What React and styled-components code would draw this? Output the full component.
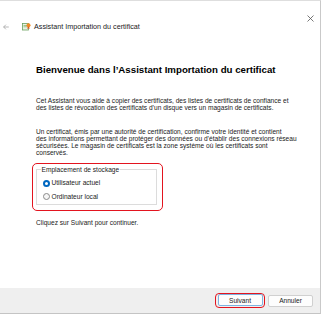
import React from 'react'
import styled, { createGlobalStyle } from 'styled-components'

const Global = createGlobalStyle`
  html, body { margin: 0; padding: 0; background: #ffffff; }
  body { font-family: 'Liberation Sans', Arial, sans-serif; color: #1b1b1b; }
`

const Window = styled.div`
  box-sizing: border-box;
  width: 321px;
  height: 314px;
  border-top: 1px solid #dedede;
  border-right: 1px solid #c9c9c9;
  border-bottom: 1px solid #c4c4c4;
  display: flex;
  flex-direction: column;
  background: #ffffff;
`

const Header = styled.div`
  display: flex;
  justify-content: space-between;
  align-items: flex-start;
  padding: 14px 6px 0 3px;
`

const NavGroup = styled.div`
  display: flex;
  align-items: center;
  margin-top: 7px;
  font-size: 7.2px;
  line-height: 9px;
  color: #1a1a1a;
`

const IconButton = styled.span`
  display: flex;
  align-items: center;
  margin-right: ${(p) => p.$space || 0}px;
`

const Content = styled.div`
  flex: 1;
  padding: 33px 0 0 36px;
  display: flex;
  flex-direction: column;
  align-items: flex-start;
`

const Heading = styled.h1`
  margin: 0 0 23px;
  font-size: 9.7px;
  line-height: 11px;
  font-weight: 700;
  color: #000;
  white-space: nowrap;
`

const Text = styled.p`
  margin: 0 0 ${(p) => p.$gap || 0}px;
  font-size: 6.6px;
  line-height: 6.9px;
  color: #1a1a1a;
  white-space: nowrap;
`

const Highlight = styled.div`
  box-sizing: border-box;
  width: 131px;
  height: 48px;
  margin-left: -4px;
  margin-bottom: 9px;
  border: 1.5px solid #e3141f;
  border-radius: 5px;
  padding: 2px 0 0 2.5px;
`

const Group = styled.fieldset`
  box-sizing: border-box;
  width: 121px;
  height: 39px;
  margin: 0;
  border: 1px solid #dcdcdc;
  padding: 6px 0 0 6px;
  display: flex;
  flex-direction: column;
  gap: 6px;
  legend {
    font-size: 6.6px;
    line-height: 7px;
    padding: 0 1px;
    margin-left: -2px;
    color: #1a1a1a;
  }
`

const RadioRow = styled.label`
  display: flex;
  align-items: center;
  gap: 2px;
  font-size: 6.6px;
  line-height: 7.5px;
  color: #1a1a1a;
`

const RadioDot = styled.span`
  box-sizing: border-box;
  width: 7px;
  height: 7px;
  border-radius: 50%;
  border: ${(p) => (p.$checked ? '2px solid #0067c0' : '1px solid #8a8a8a')};
  background: ${(p) => (p.$checked ? '#ffffff' : '#f6f6f6')};
`

const Footer = styled.div`
  height: 25px;
  background: #efefef;
  display: flex;
  justify-content: flex-end;
  align-items: center;
  gap: 3px;
  padding-right: 7px;
`

const Focus = styled.div`
  display: flex;
  padding: 0.5px 1.5px 1px;
  border: 1.5px solid #e3141f;
  border-radius: 4px;
`

const Button = styled.button`
  box-sizing: border-box;
  width: 45px;
  height: 12px;
  padding: 0;
  font-family: inherit;
  font-size: 6.6px;
  color: #1a1a1a;
  background: #fdfdfd;
  border: 1px solid ${(p) => (p.$primary ? '#7fb3e0' : '#d0d0d0')};
  border-radius: 2px;
`

const CertIcon = () => (
  <svg width="9" height="9" viewBox="0 0 9 9">
    <rect x="0.5" y="1.5" width="6" height="6.5" fill="#e8f2e4" stroke="#6aa05c" strokeWidth="0.8" />
    <rect x="1.5" y="3" width="3.5" height="0.7" fill="#7fb06d" />
    <rect x="1.5" y="4.5" width="3.5" height="0.7" fill="#7fb06d" />
    <circle cx="6.5" cy="3.2" r="2" fill="#f08a24" />
    <path d="M5.7 4.8 L5.3 7 L6.5 6.3 L7.6 7 L7.2 4.8 Z" fill="#d9531e" />
  </svg>
)

export default function App() {
  return (
    <>
      <Global />
      <Window>
        <Header>
          <NavGroup>
            <IconButton $space={13}>
              <svg width="6" height="6" viewBox="0 0 6 6">
                <path d="M5.8 3 H0.6 M2.9 0.7 L0.6 3 L2.9 5.3" fill="none" stroke="#9a9a9a" strokeWidth="0.7" />
              </svg>
            </IconButton>
            <IconButton $space={3}>
              <CertIcon />
            </IconButton>
            <span>Assistant Importation du certificat</span>
          </NavGroup>
          <IconButton>
            <svg width="7" height="7" viewBox="0 0 7 7">
              <path d="M0.5 0.5 L6.5 6.5 M6.5 0.5 L0.5 6.5" stroke="#555" strokeWidth="0.8" />
            </svg>
          </IconButton>
        </Header>
        <Content>
          <Heading>Bienvenue dans l’Assistant Importation du certificat</Heading>
          <Text $gap={17.5}>
            Cet Assistant vous aide à copier des certificats, des listes de certificats de confiance et
            <br />
            des listes de révocation des certificats d’un disque vers un magasin de certificats.
          </Text>
          <Text $gap={6.5}>
            Un certificat, émis par une autorité de certification, confirme votre identité et contient
            <br />
            des informations permettant de protéger des données ou d’établir des connexions réseau
            <br />
            sécurisées. Le magasin de certificats est la zone système où les certificats sont
            <br />
            conservés.
          </Text>
          <Highlight>
            <Group>
              <legend>Emplacement de stockage</legend>
              <RadioRow>
                <RadioDot $checked />
                Utilisateur actuel
              </RadioRow>
              <RadioRow>
                <RadioDot />
                Ordinateur local
              </RadioRow>
            </Group>
          </Highlight>
          <Text>Cliquez sur Suivant pour continuer.</Text>
        </Content>
        <Footer>
          <Focus>
            <Button $primary>Suivant</Button>
          </Focus>
          <Button>Annuler</Button>
        </Footer>
      </Window>
    </>
  )
}
